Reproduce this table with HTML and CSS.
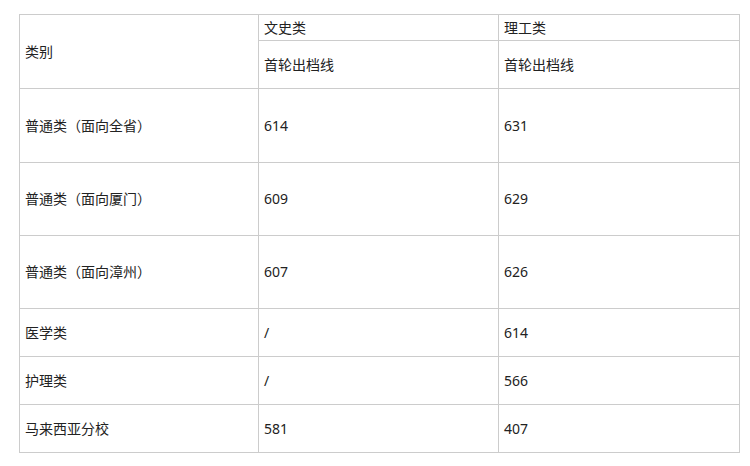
FILE: index.html
```html
<!DOCTYPE html>
<html>
<head>
<meta charset="utf-8">
<link rel="stylesheet" href="styles.css">
</head>
<body>
<table class="score">
  <colgroup>
    <col class="c1"><col class="c2"><col class="c3">
  </colgroup>
  <tr class="h26">
    <td rowspan="2">类别</td>
    <td>文史类</td>
    <td>理工类</td>
  </tr>
  <tr class="h48">
    <td>首轮出档线</td>
    <td>首轮出档线</td>
  </tr>
  <tr class="h74">
    <td>普通类（面向全省）</td>
    <td>614</td>
    <td>631</td>
  </tr>
  <tr class="h73">
    <td>普通类（面向厦门）</td>
    <td>609</td>
    <td>629</td>
  </tr>
  <tr class="h73">
    <td>普通类（面向漳州）</td>
    <td>607</td>
    <td>626</td>
  </tr>
  <tr class="h48">
    <td>医学类</td>
    <td>/</td>
    <td>614</td>
  </tr>
  <tr class="h48">
    <td>护理类</td>
    <td>/</td>
    <td>566</td>
  </tr>
  <tr class="h48">
    <td>马来西亚分校</td>
    <td>581</td>
    <td>407</td>
  </tr>
</table>
</body>
</html>
```
FILE: styles.css
```css
html, body {
  margin: 0;
  padding: 0;
  background: #fff;
}
body {
  padding: 14px 0 0 19px;
  font-family: "Noto Sans", "Noto Sans CJK SC", sans-serif;
  font-size: 14px;
  color: #222;
}
.score {
  border-collapse: collapse;
  table-layout: fixed;
  width: 720px;
}
.c1 { width: 239px; }
.c2 { width: 240px; }
.c3 { width: 241px; }
.score td {
  border: 1px solid #ccc;
  padding: 0 5px;
  vertical-align: middle;
  line-height: 20px;
}
.h26 { height: 26px; }
.h48 { height: 48px; }
.h73 { height: 73px; }
.h74 { height: 74px; }
```
